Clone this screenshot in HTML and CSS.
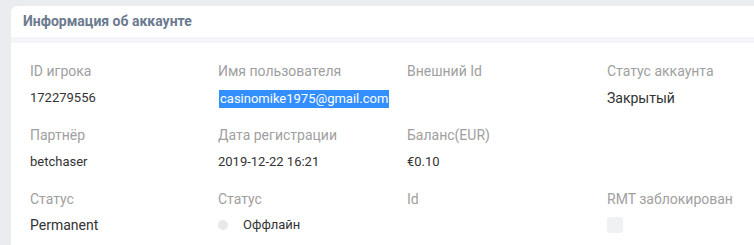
FILE: index.html
```html
<!DOCTYPE html>
<html lang="ru">
<head>
<meta charset="utf-8">
<title>Информация об аккаунте</title>
<link rel="stylesheet" href="styles.css">
</head>
<body>
<div class="page">
  <section class="card">
    <header class="card-head">Информация об аккаунте</header>
    <div class="divider"></div>
    <div class="card-body">
      <div class="row">
        <div class="field"><div class="label">ID игрока</div><div class="value">172279556</div></div>
        <div class="field"><div class="label">Имя пользователя</div><div class="value"><span class="sel">casinomike1975@gmail.com</span></div></div>
        <div class="field"><div class="label">Внешний Id</div><div class="value"></div></div>
        <div class="field"><div class="label">Статус аккаунта</div><div class="value big">Закрытый</div></div>
      </div>
      <div class="row">
        <div class="field"><div class="label">Партнёр</div><div class="value">betchaser</div></div>
        <div class="field"><div class="label">Дата регистрации</div><div class="value">2019-12-22 16:21</div></div>
        <div class="field"><div class="label">Баланс(EUR)</div><div class="value">€0.10</div></div>
        <div class="field"></div>
      </div>
      <div class="row row-last">
        <div class="field"><div class="label">Статус</div><div class="value big">Permanent</div></div>
        <div class="field"><div class="label">Статус</div><div class="value online"><span class="dot"></span>Оффлайн</div></div>
        <div class="field"><div class="label">Id</div><div class="value"></div></div>
        <div class="field"><div class="label">RMT заблокирован</div><div class="value"><span class="checkbox"></span></div></div>
      </div>
    </div>
  </section>
</div>
</body>
</html>
```

FILE: styles.css
```css
* { box-sizing: border-box; }
html, body {
  margin: 0;
  background: #ebecf0;
  font-family: Roboto, "Noto Sans", Arial, sans-serif;
  overflow: hidden;
}
.page {
  padding: 6px 0 0 11px;
  height: 245px;
}
.card {
  background: #fff;
  border-radius: 6px 0 0 0;
  height: 239px;
  margin-right: -10px;
}
.card-head {
  height: 31px;
  padding: 7px 0 0 12px;
  font-size: 14px;
  line-height: 17px;
  font-weight: 700;
  color: #6b7a8f;
}
.divider {
  height: 6px;
  background: #f4f5f9;
}
.card-body {
  padding: 20px 0 0 19px;
}
.row {
  display: grid;
  grid-template-columns: 188px 189px 200px 1fr;
}
.row + .row { margin-top: 19px; }
.row-last { margin-top: 21px !important; }
.field { min-height: 43px; }
.label {
  font-size: 14px;
  line-height: 17px;
  color: #a0a0a0;
  margin-bottom: 10px;
}
.row-last .label { margin-bottom: 9px; }
.value {
  font-size: 13px;
  line-height: 16px;
  color: #333;
  min-height: 16px;
  display: flex;
  align-items: center;
}
.value.big { font-size: 14px; }
.sel {
  background: #338fff;
  color: #fff;
  padding: 1px 1px;
  margin-left: 1px;
}
.dot {
  width: 10px;
  height: 10px;
  border-radius: 50%;
  background: #e6e8eb;
  margin-right: 15px;
}
.checkbox {
  display: block;
  width: 16px;
  height: 16px;
  border-radius: 3px;
  background: #f0f1f2;
}
```
